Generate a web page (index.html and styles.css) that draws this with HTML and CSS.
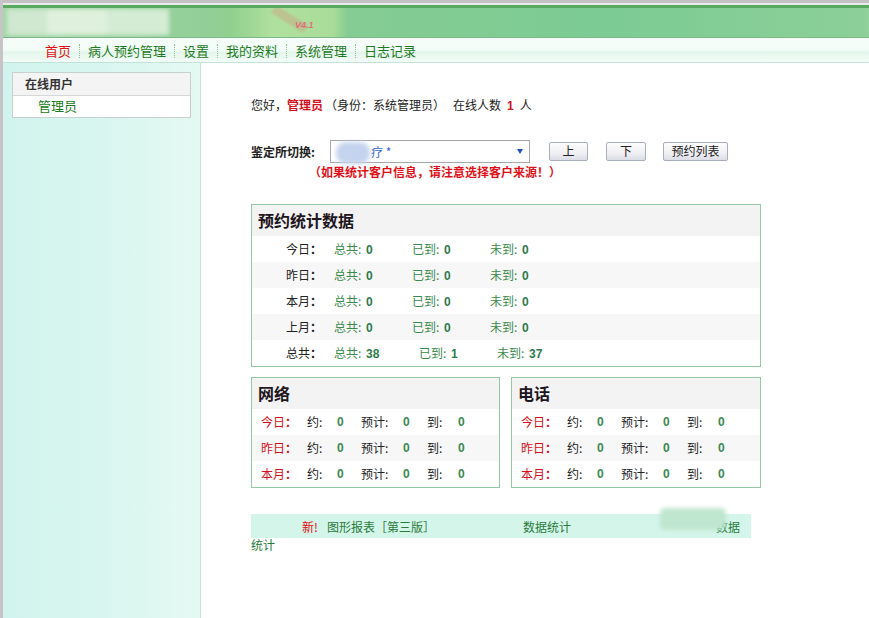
FILE: index.html
```html
<!DOCTYPE html>
<html lang="zh-CN">
<head>
<meta charset="utf-8">
<title>预约管理系统</title>
<link rel="stylesheet" href="styles.css">
</head>
<body>
<div class="page">
  <div class="topstrip"></div>
  <header class="banner">
    <div class="logo"><span class="lb b1"></span><span class="lb b2"></span><span class="lb b3"></span></div>
    <div class="stripe"></div>
    <span class="ver">V4.1</span>
  </header>
  <nav class="nav">
    <a class="nav-item active">首页</a><span class="sep"></span>
    <a class="nav-item">病人预约管理</a><span class="sep"></span>
    <a class="nav-item">设置</a><span class="sep"></span>
    <a class="nav-item">我的资料</a><span class="sep"></span>
    <a class="nav-item">系统管理</a><span class="sep"></span>
    <a class="nav-item">日志记录</a>
  </nav>
  <div class="main">
    <aside class="side">
      <div class="userbox">
        <div class="userbox-head">在线用户</div>
        <div class="userbox-row">管理员</div>
      </div>
    </aside>
    <section class="content">
      <p class="greet">您好，<b class="red">管理员</b><span class="g1">（身份：系统管理员）</span><span class="g2">在线人数</span><b class="red num">1</b><span class="g3">人</span></p>
      <div class="switch">
        <label class="switch-label">鉴定所切换:</label>
        <div class="select"><span class="blurtxt"></span><span class="seltxt">疗 *</span><span class="arrow"></span></div>
        <button class="btn b-up">上</button>
        <button class="btn b-down">下</button>
        <button class="btn b-list">预约列表</button>
      </div>
      <p class="note">（如果统计客户信息，请注意选择客户来源！）</p>

      <div class="box stats">
        <div class="box-title">预约统计数据</div>
        <div class="srow"><span class="lab">今日<b>：</b></span><span class="c1">总共: <b>0</b></span><span class="c2">已到: <b>0</b></span><span>未到: <b>0</b></span></div>
        <div class="srow alt"><span class="lab">昨日<b>：</b></span><span class="c1">总共: <b>0</b></span><span class="c2">已到: <b>0</b></span><span>未到: <b>0</b></span></div>
        <div class="srow"><span class="lab">本月<b>：</b></span><span class="c1">总共: <b>0</b></span><span class="c2">已到: <b>0</b></span><span>未到: <b>0</b></span></div>
        <div class="srow alt"><span class="lab">上月<b>：</b></span><span class="c1">总共: <b>0</b></span><span class="c2">已到: <b>0</b></span><span>未到: <b>0</b></span></div>
        <div class="srow last"><span class="lab">总共<b>：</b></span><span class="c1">总共: <b>38</b></span><span class="c2">已到: <b>1</b></span><span>未到: <b>37</b></span></div>
      </div>

      <div class="pair">
        <div class="box small">
          <div class="box-title">网络</div>
          <div class="prow"><span class="plab">今日<b>：</b></span><span>约:</span><b>0</b><span>预计:</span><b>0</b><span>到:</span><b>0</b></div>
          <div class="prow alt"><span class="plab">昨日<b>：</b></span><span>约:</span><b>0</b><span>预计:</span><b>0</b><span>到:</span><b>0</b></div>
          <div class="prow"><span class="plab">本月<b>：</b></span><span>约:</span><b>0</b><span>预计:</span><b>0</b><span>到:</span><b>0</b></div>
        </div>
        <div class="box small phone">
          <div class="box-title">电话</div>
          <div class="prow"><span class="plab">今日<b>：</b></span><span>约:</span><b>0</b><span>预计:</span><b>0</b><span>到:</span><b>0</b></div>
          <div class="prow alt"><span class="plab">昨日<b>：</b></span><span>约:</span><b>0</b><span>预计:</span><b>0</b><span>到:</span><b>0</b></div>
          <div class="prow"><span class="plab">本月<b>：</b></span><span>约:</span><b>0</b><span>预计:</span><b>0</b><span>到:</span><b>0</b></div>
        </div>
      </div>

      <div class="links">
        <span class="new">新!</span><a class="lk lk1">图形报表［第三版］</a><a class="lk lk2">数据统计</a><a class="lk lk3">数据</a><span class="blurlink"></span>
      </div>
      <div class="links-wrap">统计</div>
    </section>
  </div>
</div>
</body>
</html>
```
FILE: styles.css
```css
* { box-sizing: border-box; }
html, body { margin: 0; padding: 0; }
body {
  width: 869px;
  height: 618px;
  overflow: hidden;
  background: #fff;
  font-family: "Noto Sans CJK SC", "Liberation Sans", sans-serif;
  font-size: 12px;
  color: #222;
}
.page {
  border-left: 3px solid #c6c4c6;
  height: 618px;
  display: flex;
  flex-direction: column;
}
.topstrip {
  height: 8px;
  background: linear-gradient(#c4c0c4 0, #c4c0c4 3px, #e8ece8 3px, #e8ece8 5px, #58a862 5px, #58a862 8px);
}
.banner {
  height: 30px;
  position: relative;
  background: linear-gradient(90deg, #a4d6a8 0, #92cf98 200px, #90d08e 228px, #b0e09e 270px, #a9dc98 330px, #84cc92 345px, #7ccb94 600px, #8ccf98 860px, #96d49e 869px);
  border-bottom: 1px solid #7bb88a;
  overflow: hidden;
}
.logo {
  position: absolute;
  left: 4px; top: 1px;
  width: 162px; height: 26px;
  display: flex;
  filter: blur(2px);
}
.lb { display: block; height: 100%; }
.b1 { width: 40px; background: #cfe8cf; }
.b2 { width: 60px; background: #dff0dc; }
.b3 { width: 62px; background: #d4ecd4; }
.stripe {
  position: absolute;
  left: 282px; top: -8px;
  width: 9px; height: 38px;
  background: rgba(205, 160, 130, 0.45);
  transform: rotate(-58deg);
  filter: blur(1px);
}
.ver {
  position: absolute;
  left: 292px; top: 12px;
  font-family: "Liberation Sans", sans-serif;
  font-size: 9px;
  font-weight: bold;
  font-style: italic;
  color: #e0707a;
}
.nav {
  height: 25px;
  display: flex;
  align-items: center;
  padding-left: 42px;
  background: linear-gradient(#f6fdf9 0, #f2fcf7 50%, #e4f6ec 60%, #f3fcf7 100%);
  border-bottom: 1px solid #c2e2da;
}
.nav-item {
  font-size: 13px;
  color: #1f7a1f;
  line-height: 16px;
  margin-top: 2px;
}
.nav-item.active { color: #e01010; }
.sep {
  display: block;
  width: 0;
  height: 14px;
  border-left: 1px dotted #9ab89a;
  margin: 2px 8px 0 8px;
}
.main {
  flex: 1;
  display: flex;
}
.side {
  width: 198px;
  background: linear-gradient(90deg, #d2f4ee 0, #d8f6ef 100px, #e6f9f3 198px);
  border-right: 1px solid #bfe2dc;
  padding: 9px 0 0 9px;
}
.userbox {
  width: 179px;
  border: 1px solid #c8d0d0;
  background: #fff;
}
.userbox-head {
  height: 23px;
  line-height: 22px;
  padding-left: 12px;
  font-weight: bold;
  font-size: 12px;
  color: #333;
  background: #f4f4f4;
  border-bottom: 1px solid #d4d8d8;
}
.userbox-row {
  height: 21px;
  line-height: 20px;
  padding-left: 25px;
  color: #1a7a1a;
  font-size: 13px;
}
.content {
  flex: 1;
  padding-left: 50px;
  background: #fff;
}
.greet {
  margin: 35px 0 0;
  line-height: 14px;
  white-space: nowrap;
}
.red { color: #d4101c; }
.greet b { font-weight: bold; }
.g1 { margin-left: 2px; }
.g2 { margin-left: 8px; }
.num { margin-left: 6px; font-family: "Liberation Sans", sans-serif; }
.g3 { margin-left: 6px; }
.switch {
  display: flex;
  align-items: center;
  margin-top: 26px;
  height: 24px;
}
.switch-label {
  font-weight: bold;
  width: 79px;
}
.select {
  position: relative;
  width: 200px;
  height: 23px;
  border: 1px solid #a7a7a7;
  background: #fff;
  display: flex;
  align-items: center;
}
.blurtxt {
  position: absolute;
  left: 5px; top: 1px;
  width: 34px; height: 22px;
  border-radius: 10px;
  background: #c4d4ee;
  filter: blur(2px);
}
.seltxt {
  margin-left: 40px;
  color: #3a66c8;
  font-size: 12px;
}
.arrow {
  position: absolute;
  right: 6px; top: 8px;
  width: 0; height: 0;
  border-left: 3px solid transparent;
  border-right: 3px solid transparent;
  border-top: 5px solid #2050b0;
}
.btn {
  height: 19px;
  padding: 0;
  font-family: "Noto Sans CJK SC", sans-serif;
  font-size: 12px;
  color: #222;
  border: 1px solid #a6aebc;
  border-radius: 2px;
  background: linear-gradient(#fdfdfd, #f0f0f4 60%, #dcdde6);
  line-height: 16px;
}
.b-up { width: 39px; margin-left: 19px; }
.b-down { width: 40px; margin-left: 18px; }
.b-list { width: 65px; margin-left: 17px; }
.note {
  margin: 2px 0 0 58px;
  color: #e01018;
  font-weight: bold;
  line-height: 14px;
  white-space: nowrap;
}
.box {
  border: 1px solid #93c8a2;
  background: #fff;
}
.stats {
  width: 510px;
  margin-top: 25px;
}
.box-title {
  height: 31px;
  line-height: 31px;
  padding-left: 6px;
  font-size: 16px;
  font-weight: bold;
  color: #1e1620;
  background: #f3f3f3;
}
.srow {
  height: 26px;
  line-height: 26px;
  display: flex;
  background: #fff;
  color: #3a8a4c;
  white-space: nowrap;
}
.srow.alt { background: #f7f7f7; }
.srow .lab {
  width: 82px;
  text-align: right;
  padding-right: 12px;
  color: #222;
}
.srow .lab b, .plab b { font-weight: bold; }
.srow .c1 { width: 78px; }
.srow .c2 { width: 78px; }
.srow.last .c1 { width: 85px; }
.srow b {
  font-family: "Liberation Sans", sans-serif;
  font-weight: bold;
  color: #2e7a4a;
  margin-left: 2px;
}
.srow .lab b { font-family: "Noto Sans CJK SC", sans-serif; color: #222; margin-left: 0; }
.pair {
  display: flex;
  gap: 11px;
  margin-top: 10px;
}
.small { width: 249px; }
.phone { width: 250px; }
.prow {
  height: 26px;
  line-height: 26px;
  display: grid;
  grid-template-columns: 46px 30px 24px 42px 24px 31px 20px;
  padding-left: 9px;
  white-space: nowrap;
}
.prow.alt { background: #f7f7f7; }
.prow .plab { color: #d41020; }
.prow > b {
  font-family: "Liberation Sans", sans-serif;
  font-weight: bold;
  color: #3a8a50;
}
.links {
  width: 500px;
  height: 24px;
  margin-top: 26px;
  background: #d4f5ea;
  display: flex;
  align-items: center;
  white-space: nowrap;
  color: #2a7a3a;
  position: relative;
}
.links > * { flex-shrink: 0; }
.new { margin-left: 51px; color: #e01010; width: 25px; }
.lk { color: #2a7a3a; }
.lk1 { width: 196px; }
.lk2 { width: 193px; }
.lk3 { width: 24px; }
.blurlink {
  position: absolute;
  left: 409px; top: -6px;
  width: 66px;
  height: 22px;
  background: #bfe6cf;
  border-radius: 5px;
  filter: blur(2px);
}
.links-wrap {
  color: #2a7a3a;
  line-height: 14px;
}
```
